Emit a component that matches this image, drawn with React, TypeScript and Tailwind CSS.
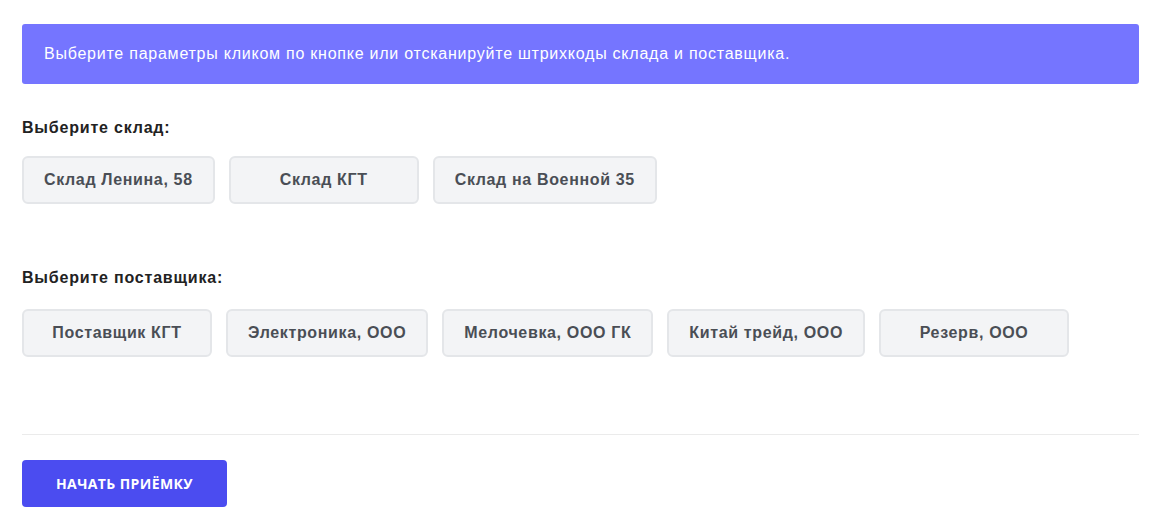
const warehouses = ["Склад Ленина, 58", "Склад КГТ", "Склад на Военной 35"]

const suppliers = [
  "Поставщик КГТ",
  "Электроника, ООО",
  "Мелочевка, ООО ГК",
  "Китай трейд, ООО",
  "Резерв, ООО",
]

function Choice({ label }: { label: string }) {
  return (
    <button
      type="button"
      className="h-[48px] min-w-[190px] px-5 rounded-md border-2 border-[#e4e6e9] bg-[#f3f4f6] text-[16px] font-bold tracking-[0.65px] text-[#4a4e55]"
    >
      {label}
    </button>
  )
}

export default function App() {
  return (
    <div
      className="min-h-screen bg-white pl-[22px] pr-[23px] pt-[24px]"
      style={{ fontFamily: '"Liberation Sans", Arial, sans-serif' }}
    >
      <div className="h-[60px] flex items-center px-[22px] rounded-[3px] bg-[#7575ff] text-white text-[16px] tracking-[0.76px]">
        Выберите параметры кликом по кнопке или отсканируйте штрихкоды склада и поставщика.
      </div>

      <h3 className="mt-[32px] text-[16px] leading-6 font-bold tracking-[0.8px] text-[#222]">Выберите склад:</h3>
      <div className="mt-[16px] flex flex-wrap gap-[14px]">
        {warehouses.map((w) => (
          <Choice key={w} label={w} />
        ))}
      </div>

      <h3 className="mt-[62px] text-[16px] leading-6 font-bold tracking-[0.8px] text-[#222]">Выберите поставщика:</h3>
      <div className="mt-[19px] flex flex-wrap gap-[14px]">
        {suppliers.map((s) => (
          <Choice key={s} label={s} />
        ))}
      </div>

      <div className="mt-[77px] border-t border-[#ebebeb]" />

      <button
        type="button"
        className="mt-[25px] h-[47px] w-[205px] rounded-[4px] bg-[#4b4cf0] text-white text-[14px] font-bold uppercase tracking-[0.4px]"
        style={{ fontFamily: '"Open Sans", sans-serif' }}
      >
        Начать приёмку
      </button>
    </div>
  )
}
